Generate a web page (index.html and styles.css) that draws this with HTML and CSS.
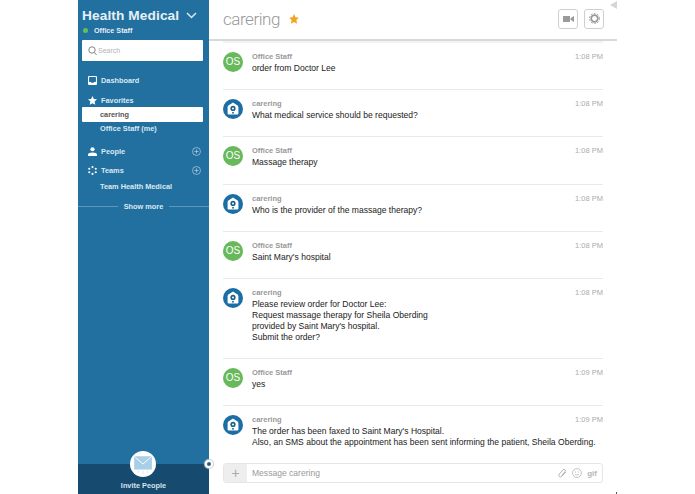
FILE: index.html
```html
<!DOCTYPE html>
<html lang="en">
<head>
<meta charset="utf-8">
<title>carering</title>
<link rel="stylesheet" href="styles.css">
</head>
<body>
<svg class="defs" width="0" height="0" aria-hidden="true">
  <symbol id="bot" viewBox="0 0 20 20">
    <circle cx="10" cy="10" r="10" fill="#1b6ea3"/>
    <path d="M10 3.4 14.2 6.2Q15.4 7 15.4 8.4V14.6Q15.4 15.6 14.4 15.6H5.6Q4.6 15.6 4.6 14.6V8.4Q4.6 7 5.8 6.2Z" fill="#fff"/>
    <circle cx="10" cy="9.4" r="2.6" fill="#1b5f8e"/>
    <circle cx="10" cy="9.4" r="1" fill="#fff"/>
    <rect x="9.2" y="13" width="1.6" height="1.6" fill="#1b5f8e"/>
  </symbol>
</svg>
<div class="app">
  <aside class="sidebar">
    <div class="brand">
      <span class="brand-name">Health Medical</span>
      <svg class="chev" width="11" height="7" viewBox="0 0 11 7"><path d="M1 1l4.5 4.5L10 1" fill="none" stroke="#d8e8f2" stroke-width="1.5"/></svg>
    </div>
    <div class="status"><span class="dot"></span><span>Office Staff</span></div>
    <div class="search">
      <svg width="9" height="10" viewBox="0 0 9 10"><circle cx="4" cy="4" r="3.2" fill="none" stroke="#777" stroke-width=".9"/><path d="M6.3 6.4 8.6 9" stroke="#777" stroke-width=".9"/></svg>
      <span>Search</span>
    </div>
    <nav class="nav">
      <div class="nav-head first">
        <svg width="9" height="9" viewBox="0 0 10 10"><path d="M1.2 0h7.6Q10 0 10 1.2v7.6Q10 10 8.8 10H1.2Q0 10 0 8.8V1.2Q0 0 1.2 0ZM1.2 1.2v5.4h1.9l.7 1h2.4l.7-1h1.9V1.2Z" fill="#fff"/></svg>
        <span>Dashboard</span>
      </div>
      <div class="nav-head fav">
        <svg width="9" height="9" viewBox="0 0 10 10"><path d="M5 0l1.5 3.3 3.5.4-2.6 2.4.7 3.6L5 8l-3.1 1.7.7-3.6L0 3.7l3.5-.4Z" fill="#fff"/></svg>
        <span>Favorites</span>
      </div>
      <div class="item active">carering</div>
      <div class="item me">Office Staff (me)</div>
      <div class="nav-head people">
        <svg width="9" height="9" viewBox="0 0 10 10"><circle cx="5" cy="2.5" r="2.3" fill="#fff"/><path d="M0 10V8.6Q0 6 5 6t5 2.6V10Z" fill="#fff"/></svg>
        <span>People</span>
        <svg class="plus" width="9" height="9" viewBox="0 0 9 9"><circle cx="4.5" cy="4.5" r="4" fill="none" stroke="#b5d0e2" stroke-width=".7"/><path d="M4.5 2.3v4.4M2.3 4.5h4.4" stroke="#b5d0e2" stroke-width=".7"/></svg>
      </div>
      <div class="nav-head teams">
        <svg width="9" height="9" viewBox="0 0 10 10"><g fill="#fff"><circle cx="5" cy="1.2" r="1.2"/><circle cx="1.4" cy="3.1" r="1.2"/><circle cx="8.6" cy="3.1" r="1.2"/><circle cx="1.4" cy="6.9" r="1.2"/><circle cx="8.6" cy="6.9" r="1.2"/><circle cx="5" cy="8.8" r="1.2"/></g></svg>
        <span>Teams</span>
        <svg class="plus" width="9" height="9" viewBox="0 0 9 9"><circle cx="4.5" cy="4.5" r="4" fill="none" stroke="#b5d0e2" stroke-width=".7"/><path d="M4.5 2.3v4.4M2.3 4.5h4.4" stroke="#b5d0e2" stroke-width=".7"/></svg>
      </div>
      <div class="item team">Team Health Medical</div>
    </nav>
    <div class="more"><span>Show more</span></div>
    <div class="invite">
      <div class="invite-icon">
        <svg width="20" height="20" viewBox="0 0 18 18"><path d="M1 2h16v12H1Z" fill="#a9cfe8"/><path d="M1 2l8 7 8-7" fill="none" stroke="#fff" stroke-width=".8"/><path d="M5 15v2M9 15v3M13 15v2" stroke="#cfe3f0" stroke-width=".7"/></svg>
      </div>
      <span>Invite People</span>
    </div>
    <div class="collapse"></div>
  </aside>
  <main class="main">
    <header class="top">
      <h1>carering</h1>
      <svg class="star" width="10" height="10" viewBox="0 0 10 10"><path d="M5 0l1.5 3.3 3.5.4-2.6 2.4.7 3.6L5 8l-3.1 1.7.7-3.6L0 3.7l3.5-.4Z" fill="#f0a623"/></svg>
      <div class="tools">
        <div class="tool"><svg width="11" height="8" viewBox="0 0 11 8"><path d="M0 1h7v6H0ZM7.5 3.2 11 1v6L7.5 4.8Z" fill="#9a9a9a"/></svg></div>
        <div class="tool"><svg width="11" height="11" viewBox="0 0 11 11"><circle cx="5.5" cy="5.5" r="3.3" fill="none" stroke="#9a9a9a" stroke-width="1.8"/><circle cx="5.5" cy="5.5" r="5" fill="none" stroke="#9a9a9a" stroke-width="1" stroke-dasharray="1.6 1.6"/></svg></div>
      </div>
      <div class="corner"></div>
    </header>
    <section class="list">
      <article class="msg"><div class="av os">OS</div><div class="body"><div class="meta"><b>Office Staff</b><time>1:08 PM</time></div><p>order from Doctor Lee</p></div></article>
      <article class="msg"><svg class="av"><use href="#bot"/></svg><div class="body"><div class="meta"><b>carering</b><time>1:08 PM</time></div><p>What medical service should be requested?</p></div></article>
      <article class="msg"><div class="av os">OS</div><div class="body"><div class="meta"><b>Office Staff</b><time>1:08 PM</time></div><p>Massage therapy</p></div></article>
      <article class="msg"><svg class="av"><use href="#bot"/></svg><div class="body"><div class="meta"><b>carering</b><time>1:08 PM</time></div><p>Who is the provider of the massage therapy?</p></div></article>
      <article class="msg"><div class="av os">OS</div><div class="body"><div class="meta"><b>Office Staff</b><time>1:08 PM</time></div><p>Saint Mary's hospital</p></div></article>
      <article class="msg"><svg class="av"><use href="#bot"/></svg><div class="body"><div class="meta"><b>carering</b><time>1:08 PM</time></div><p>Please review order for Doctor Lee:<br>Request massage therapy for Sheila Oberding<br>provided by Saint Mary's hospital.<br>Submit the order?</p></div></article>
      <article class="msg"><div class="av os">OS</div><div class="body"><div class="meta"><b>Office Staff</b><time>1:09 PM</time></div><p>yes</p></div></article>
      <article class="msg"><svg class="av"><use href="#bot"/></svg><div class="body"><div class="meta"><b>carering</b><time>1:09 PM</time></div><p>The order has been faxed to Saint Mary's Hospital.<br>Also, an SMS about the appointment has been sent informing the patient, Sheila Oberding.</p></div></article>
    </section>
    <footer class="composer">
      <div class="add">+</div>
      <div class="input">Message carering</div>
      <div class="extras">
        <svg width="9" height="10" viewBox="0 0 9 10"><path d="M7.8 4.2 4 8.2Q2.6 9.6 1.4 8.5T1.5 5.6L5 1.9Q6 .9 6.9 1.7T6.9 3.9L3.6 7.3" fill="none" stroke="#b5b5b5" stroke-width="1"/></svg>
        <svg width="10" height="10" viewBox="0 0 10 10"><circle cx="5" cy="5" r="4.4" fill="none" stroke="#b5b5b5" stroke-width=".8"/><circle cx="3.5" cy="4" r=".6" fill="#b5b5b5"/><circle cx="6.5" cy="4" r=".6" fill="#b5b5b5"/><path d="M3 6.3q2 1.5 4 0" fill="none" stroke="#b5b5b5" stroke-width=".7"/></svg>
        <span>gif</span>
      </div>
    </footer>
  </main>
</div>
</body>
</html>
```
FILE: styles.css
```css
* { box-sizing: border-box; }
html, body { margin: 0; height: 494px; overflow: hidden; background: #fff; }
body { font-family: "Liberation Sans", Arial, sans-serif; color: #222; }
.defs { display: block; height: 0; }
.app { display: flex; height: 494px; margin-left: 78px; width: 539px; }

.sidebar { position: relative; width: 131px; flex: none; background: #22709f; color: #fff; display: flex; flex-direction: column; }
.brand { display: flex; align-items: center; justify-content: space-between; padding: 7px 12px 0 4px; height: 24px; }
.brand-name { font-size: 13.7px; font-weight: 700; color: #e6f0f6; letter-spacing: .1px; }
.status { display: flex; align-items: center; gap: 6px; padding-left: 5px; font-size: 7.2px; font-weight: 700; height: 12px; color: #e4eff6; }
.dot { width: 5px; height: 5px; border-radius: 50%; background: #62c05c; }
.search { margin: 4px 6px 0 4px; height: 21px; background: #fff; border-radius: 1px; display: flex; align-items: center; gap: 1px; padding-left: 6px; color: #b4b4b4; font-size: 7px; }
.nav { display: flex; flex-direction: column; font-size: 7.35px; font-weight: 700; color: #dbe9f2; }
.nav-head { display: flex; align-items: center; gap: 4px; padding: 0 8px 0 10px; height: 12px; }
.nav-head .plus { margin-left: auto; }
.first { margin-top: 13px; }
.fav { margin-top: 8px; margin-bottom: 1px; }
.people { margin-top: 10px; }
.teams { margin-top: 7.5px; }
.item { margin: 0 6px 0 4px; padding-left: 18px; height: 15px; line-height: 15px; }
.me { height: 13px; line-height: 13px; }
.team { margin-top: 2.5px; }
.active { background: #fff; color: #555; border-radius: 1px; }
.more { display: flex; align-items: center; gap: 6px; margin-top: 8px; font-size: 7.35px; font-weight: 700; color: #dbe9f2; }
.more::before, .more::after { content: ""; flex: 1; height: 1px; background: #5c97bb; }
.invite { position: relative; margin-top: auto; height: 30px; background: #164a6f; display: flex; justify-content: center; align-items: flex-end; padding-bottom: 4px; font-size: 7.35px; font-weight: 700; color: #d5e3ec; }
.invite-icon { position: absolute; top: -13px; left: 52px; width: 26px; height: 26px; border-radius: 50%; background: #fff; display: flex; align-items: center; justify-content: center; }
.collapse { position: absolute; right: -4px; top: 460px; width: 8px; height: 8px; border-radius: 50%; background: #2c5f80; border: 2px solid #fff; box-shadow: 0 0 1px 1px #ccc; }

.main { width: 408px; flex: none; display: flex; flex-direction: column; position: relative; }
.main::after { content: ""; position: absolute; right: 0; bottom: 0; width: 1px; height: 2px; background: #555; }
.top { height: 41px; flex: none; display: flex; align-items: center; padding: 0 13px 2px 14px; border-bottom: 2px solid #d8d8d8; position: relative; }
.top h1 { margin: 0; font-family: Roboto, "Liberation Sans", sans-serif; font-size: 17px; font-weight: 300; letter-spacing: -.45px; color: #999; }
.star { margin-left: 9px; }
.tools { margin-left: auto; display: flex; gap: 6px; }
.tool { width: 20px; height: 20px; border: 1px solid #cfcfcf; border-radius: 3px; display: flex; align-items: center; justify-content: center; }
.corner { position: absolute; right: 0; top: 1px; border-style: solid; border-width: 4.5px 7px 4.5px 0; border-color: transparent #d6d6d6 transparent transparent; }

.list { flex: 1; margin: 0 14px; padding-top: 2px; overflow: hidden; background: linear-gradient(#f3f3f3 2px, transparent 2px); }
.msg { display: flex; gap: 9px; padding: 9px 0 15.2px; border-bottom: 1px solid #e9e9e9; }
.msg:last-child { border-bottom: 0; }
.av { width: 20px; height: 20px; flex: none; }
.os { border-radius: 50%; background: #68b95b; color: #fff; font-size: 10px; line-height: 20px; text-align: center; }
.body { flex: 1; min-width: 0; }
.meta { display: flex; justify-content: space-between; font-size: 7.5px; line-height: 10px; color: #999; }
.meta b { font-weight: 700; }
.meta time { font-weight: 400; color: #aaa; }
.body p { margin: 1px 0 0; font-size: 8.55px; line-height: 11px; color: #222; }

.composer { height: 20px; margin: 0 14px 11px; flex: none; display: flex; border: 1px solid #e6e6e6; border-radius: 3px; font-size: 8.55px; }
.add { width: 23px; background: #eeeeee; color: #aaa; font-size: 14px; line-height: 18px; text-align: center; }
.input { flex: 1; line-height: 18px; padding-left: 5px; color: #999; }
.extras { display: flex; align-items: center; gap: 5px; padding-right: 5px; color: #b5b5b5; font-size: 8px; font-weight: 700; }
```
